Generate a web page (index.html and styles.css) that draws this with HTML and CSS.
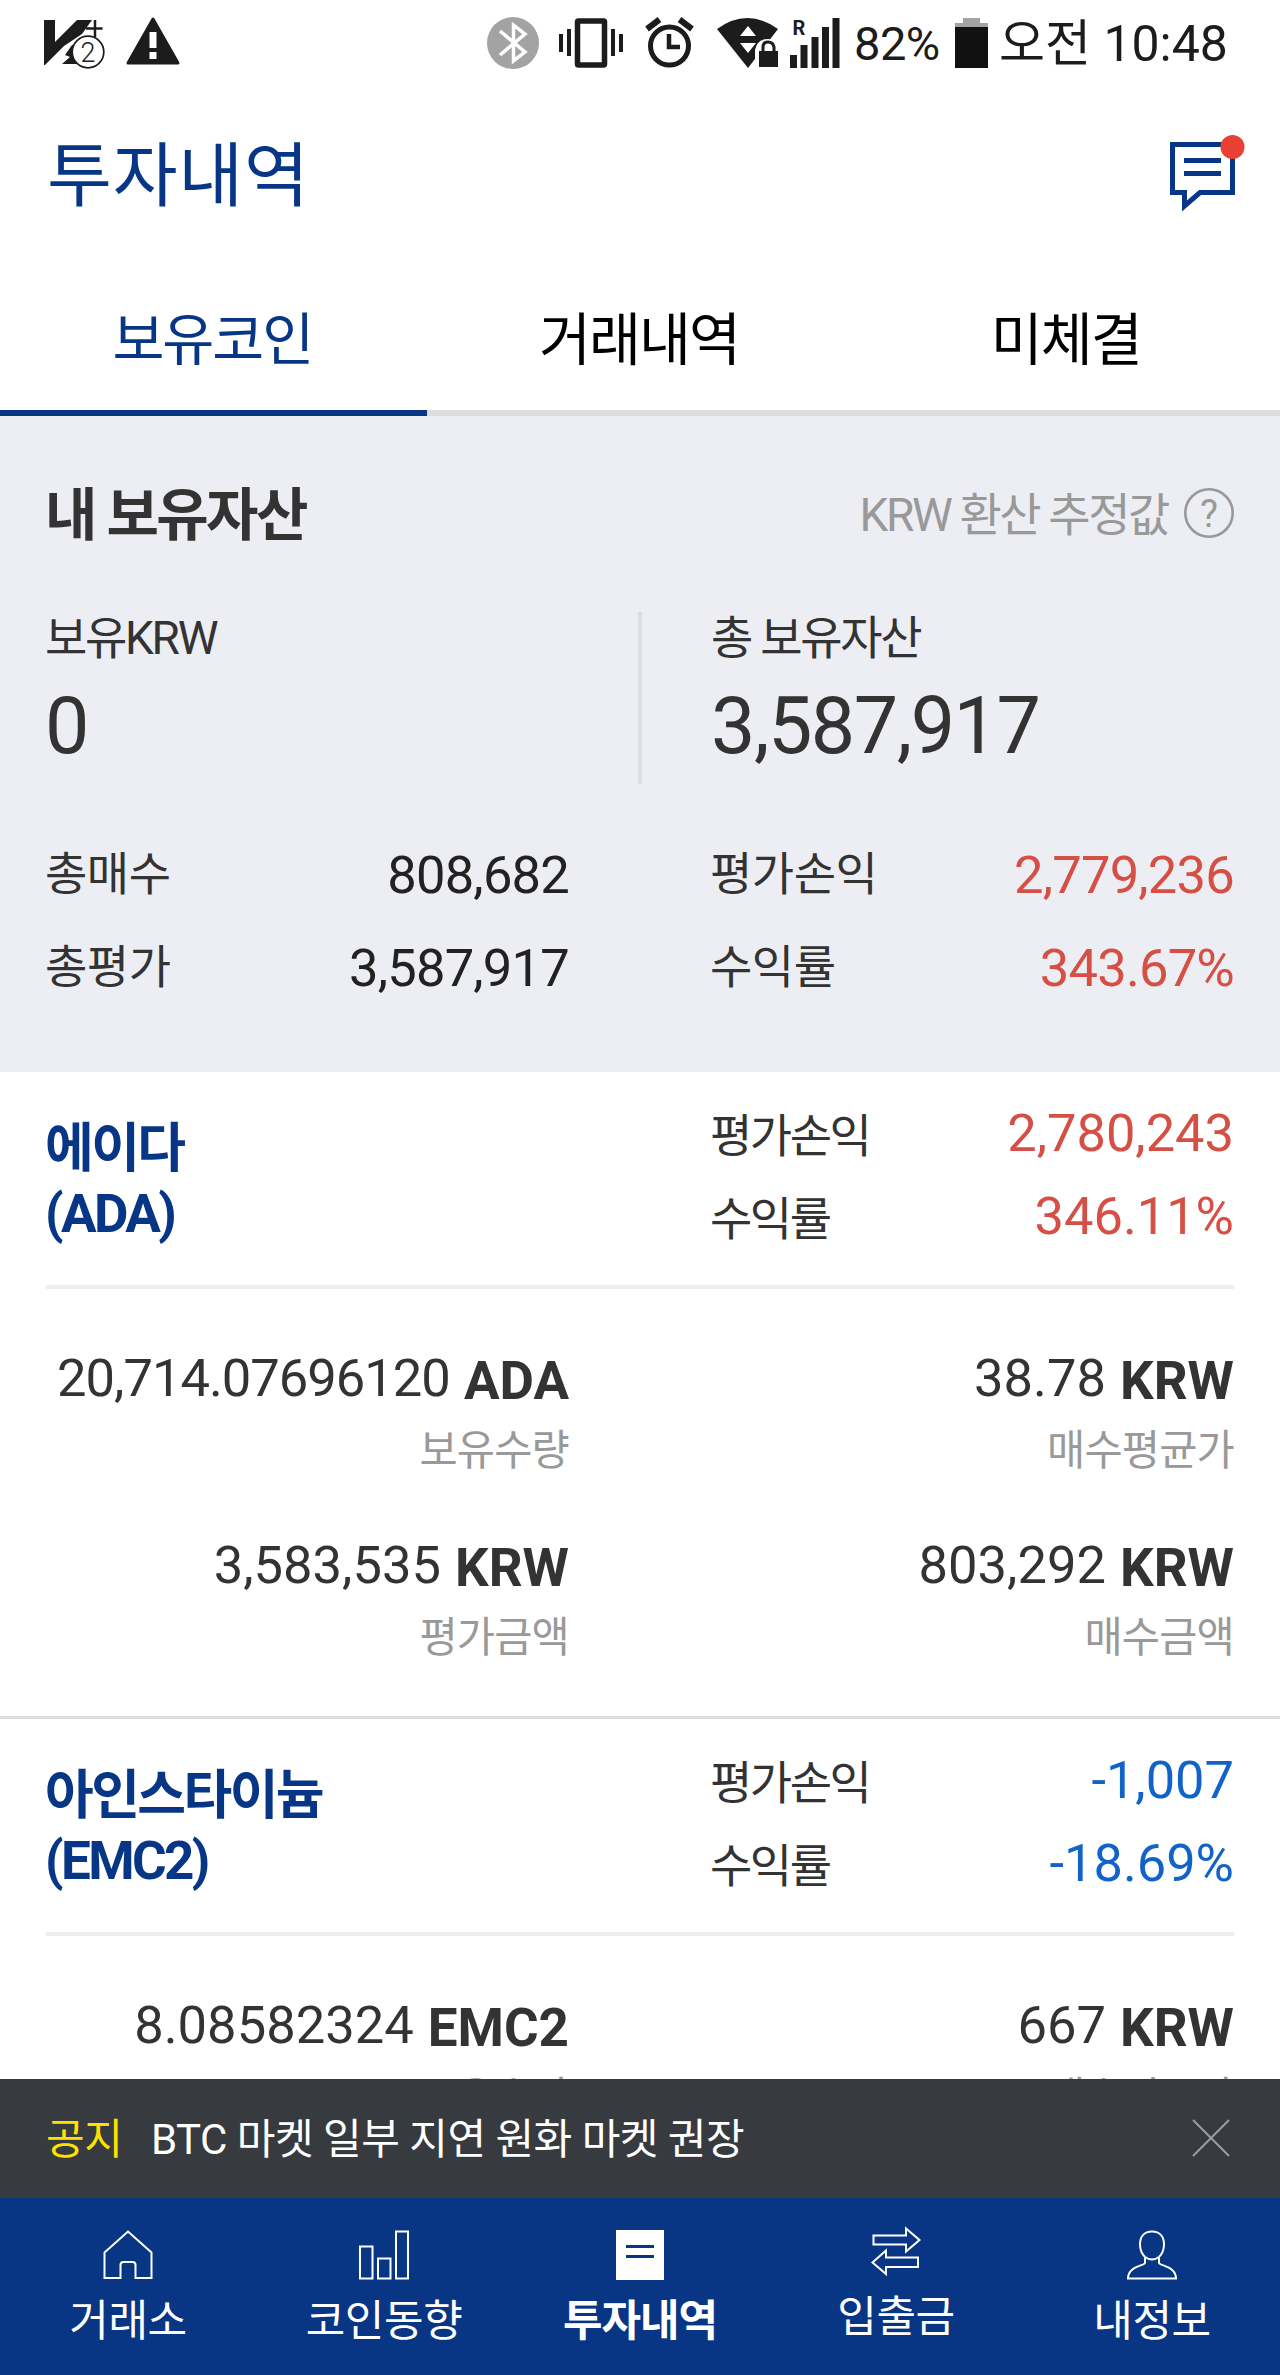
FILE: index.html
```html
<!DOCTYPE html>
<html lang="ko">
<head>
<meta charset="utf-8">
<title>투자내역</title>
<link rel="stylesheet" href="styles.css">
</head>
<body>
<div class="screen">
  <div class="status">
    <svg class="st-v3" width="62" height="54" viewBox="0 0 62 54"><path d="M0 2H11V24L33 2H48L38 16 20 28 1 47H0Z" fill="#1c1c1c"/><path d="M18 46 26 39 21 37 28 27H36V46Z" fill="#1c1c1c"/><path d="M42 10.500H58.500M51 2V19" stroke="#1c1c1c" stroke-width="2.500"/><circle cx="44" cy="34" r="15.800" fill="#fff" stroke="#1c1c1c" stroke-width="1.700"/><text x="44" y="43.500" text-anchor="middle" class="v3-num">2</text></svg>
    <svg class="st-warn" width="54" height="50" viewBox="0 0 54 50"><path d="M27 2 52 46H2Z" fill="#1c1c1c" stroke="#1c1c1c" stroke-width="3" stroke-linejoin="round"/><path d="M27 15V31M27 35V42" stroke="#fff" stroke-width="7"/></svg>
    <svg class="st-bt" width="52" height="52" viewBox="0 0 52 52"><circle cx="26" cy="26" r="26" fill="#a3a3a3"/><path d="M13 14 38 35 26.500 44V8L38 17 13 38" fill="none" stroke="#fff" stroke-width="3.500"/></svg>
    <svg class="st-vib" width="64" height="50" viewBox="0 0 64 50"><rect x="18.500" y="3" width="27" height="44" rx="1" fill="none" stroke="#1c1c1c" stroke-width="5.500"/><path d="M2 16V34M10 11V38M54 11V38M62 16V34" stroke="#1c1c1c" stroke-width="4"/></svg>
    <svg class="st-alarm" width="50" height="52" viewBox="0 0 50 52"><circle cx="24.500" cy="29" r="19" fill="none" stroke="#1c1c1c" stroke-width="5"/><path d="M24 17V30H35" fill="none" stroke="#1c1c1c" stroke-width="4.500"/><path d="M2 12 14.500 2.500M34.500 2.500 47 12" stroke="#1c1c1c" stroke-width="6"/></svg>
    <svg class="st-wifi" width="62" height="52" viewBox="0 0 62 52"><path d="M0 12Q30-10 61 12L31 51Z" fill="#1c1c1c"/><path d="M23 19 31 9 39 19ZM23 26H39L31 36Z" fill="#fff"/><path d="M38 52V33Q40 22 51 22T62 33V52Z" fill="#fff"/><rect x="42" y="34" width="19" height="16" fill="#1c1c1c"/><path d="M46 35V30Q46 25 51 25T57 30V35" fill="none" stroke="#1c1c1c" stroke-width="3"/></svg>
    <svg class="st-signal" width="50" height="50" viewBox="0 0 50 50"><path d="M3.500 50V37M14 50V27M25 50V19M35.500 50V9M46 50V0" stroke="#1c1c1c" stroke-width="7"/><text x="2.500" y="17" class="roam">R</text></svg>
    <span class="st-pct">82%</span>
    <svg class="st-bat" width="33" height="50" viewBox="0 0 33 50"><path d="M8 0H25V5H33V9H0V5H8Z" fill="#a3a3a3"/><rect y="9" width="33" height="41" fill="#111"/></svg>
    <span class="st-time">오전 10:48</span>
  </div>

  <header class="header">
    <h1 class="title">투자내역</h1>
    <svg class="chat" width="75" height="76" viewBox="0 0 75 76"><path d="M2.500 9.500H62.500V57.500H30L14.500 71V57.500H2.500Z" fill="none" stroke="#083686" stroke-width="5"/><path d="M14 25.500H51M14 38.500H51" stroke="#083686" stroke-width="5"/><circle cx="62.500" cy="12" r="12" fill="#e94033"/></svg>
  </header>

  <nav class="tabs">
    <a class="tab tab-on">보유코인</a>
    <a class="tab">거래내역</a>
    <a class="tab">미체결</a>
  </nav>

  <section class="summary">
    <div class="sum-head">
      <h2 class="sum-title">내 보유자산</h2>
      <div class="sum-note"><span class="note-text">KRW 환산 추정값</span><svg class="help" width="50" height="50" viewBox="0 0 50 50"><circle cx="25" cy="25" r="23.700" fill="none" stroke="#999" stroke-width="2.600"/><text x="25" y="39" text-anchor="middle" class="help-mark">?</text></svg></div>
    </div>
    <div class="sum-main">
      <div class="asset"><div class="asset-label">보유KRW</div><div class="asset-value">0</div></div>
      <div class="asset asset-r"><div class="asset-label">총 보유자산</div><div class="asset-value">3,587,917</div></div>
    </div>
    <div class="sum-grid">
      <div class="pair"><span class="k">총매수</span><span class="v">808,682</span></div>
      <div class="pair"><span class="k">평가손익</span><span class="v up">2,779,236</span></div>
      <div class="pair"><span class="k">총평가</span><span class="v">3,587,917</span></div>
      <div class="pair"><span class="k">수익률</span><span class="v up">343.67%</span></div>
    </div>
  </section>

  <main class="coins">
    <article class="coin">
      <div class="coin-head">
        <h3 class="coin-name">에이다<br>(ADA)</h3>
        <div class="coin-pl">
          <div class="row"><span class="rk">평가손익</span><span class="rv up">2,780,243</span></div>
          <div class="row"><span class="rk">수익률</span><span class="rv up">346.11%</span></div>
        </div>
      </div>
      <div class="coin-grid">
        <div class="cell"><div class="amt"><span class="long">20,714.07696120</span> <b>ADA</b></div><div class="cap">보유수량</div></div>
        <div class="cell"><div class="amt">38.78 <b>KRW</b></div><div class="cap">매수평균가</div></div>
        <div class="cell"><div class="amt">3,583,535 <b>KRW</b></div><div class="cap">평가금액</div></div>
        <div class="cell"><div class="amt">803,292 <b>KRW</b></div><div class="cap">매수금액</div></div>
      </div>
    </article>
    <article class="coin">
      <div class="coin-head">
        <h3 class="coin-name">아인스타이늄<br>(EMC2)</h3>
        <div class="coin-pl">
          <div class="row"><span class="rk">평가손익</span><span class="rv down">-1,007</span></div>
          <div class="row"><span class="rk">수익률</span><span class="rv down">-18.69%</span></div>
        </div>
      </div>
      <div class="coin-grid">
        <div class="cell"><div class="amt">8.08582324 <b>EMC2</b></div><div class="cap">보유수량</div></div>
        <div class="cell"><div class="amt">667 <b>KRW</b></div><div class="cap">매수평균가</div></div>
      </div>
    </article>
  </main>

  <div class="notice">
    <span class="notice-tag">공지</span>
    <span class="notice-text">BTC 마켓 일부 지연 원화 마켓 권장</span>
    <svg class="close" width="38" height="38" viewBox="0 0 38 38"><path d="M1 1 37 37M37 1 1 37" stroke="#9b9c9f" stroke-width="2"/></svg>
  </div>

  <nav class="bottom">
    <a class="item"><svg class="ico" width="50" height="50" viewBox="0 0 50 50"><path d="M1.500 22.500 25 1.500 48.500 22.500V48H32.500V35Q32.500 32 29.500 32H20.500Q17.500 32 17.500 35V48H1.500Z" fill="none" stroke="#fff" stroke-width="2"/></svg><span>거래소</span></a>
    <a class="item"><svg class="ico" width="50" height="50" viewBox="0 0 50 50"><path d="M1 16.500H13.500V48.500H1ZM19 28.500H31.500V48.500H19ZM37 1.500H49V48.500H37Z" fill="none" stroke="#fff" stroke-width="2"/></svg><span>코인동향</span></a>
    <a class="item item-on"><svg class="ico" width="50" height="50" viewBox="0 0 50 50"><path d="M1 0H49V50H1Z" fill="#fff"/><path d="M11 16.500H39M11 26.500H39" stroke="#083686" stroke-width="3"/></svg><span>투자내역</span></a>
    <a class="item item-up"><svg class="ico" width="50" height="50" viewBox="0 0 50 50"><path d="M2.500 9.500H35V2.500L48.500 14 35 25.500V18.500H2.500ZM47 31.500H15V24.500L1.500 36.500 15 48V41H47Z" fill="none" stroke="#fff" stroke-width="2"/></svg><span>입출금</span></a>
    <a class="item"><svg class="ico" width="50" height="50" viewBox="0 0 50 50"><path d="M25 1.500C17 1.500 13 7 13 14.500C13 20 15 24 18 27V33C17 36 1 36 1 48.500H49C49 36 33 36 32 33V27C35 24 37 20 37 14.500C37 7 33 1.500 25 1.500ZM18 27Q25 32 32 27" fill="none" stroke="#fff" stroke-width="2"/></svg><span>내정보</span></a>
  </nav>
</div>
</body>
</html>
```
FILE: styles.css
```css
* { box-sizing: border-box; margin: 0; padding: 0; }
body { font-family: Roboto, "Noto Sans CJK KR", sans-serif; background: #fff; color: #333; }
h1, h2, h3 { font-weight: 400; }
svg { display: block; flex: none; overflow: visible; }
.screen { width: 1280px; height: 2375px; display: flex; flex-direction: column; overflow: hidden; white-space: nowrap; }

.status { flex: none; height: 86px; padding: 0 50px 0 44px; display: flex; align-items: center; color: #1c1c1c; }
.st-warn { margin: 0 307px 2px 20px; }
.st-v3 { margin-top: 4px; }
.v3-num { font: 300 27px Roboto, sans-serif; fill: #1c1c1c; }
.st-vib { margin-left: 20px; }
.st-alarm { margin-left: 22px; }
.st-wifi { margin-left: 22px; }
.st-signal { margin-left: 11px; }
.roam { font: 700 20px Roboto, sans-serif; fill: #1c1c1c; }
.st-pct { margin-left: 14px; width: 101px; padding-top: 1px; font-size: 47px; letter-spacing: -0.5px; }
.st-time { margin-left: 11px; font-size: 50px; line-height: 60px; margin-top: 2px; }

.header { flex: none; height: 174px; padding: 0 35px 0 47px; display: flex; justify-content: space-between; align-items: center; }
.title { font-size: 70.500px; line-height: 174px; letter-spacing: 0.8px; padding-top: 7px; color: #083686; }

.tabs { flex: none; height: 156px; display: flex; }
.tab { flex: 1; padding-right: 2px; text-align: center; font-size: 56.500px; line-height: 163px; letter-spacing: -2px; color: #000; border-bottom: 6px solid #ddd; }
.tab-on { color: #083686; border-color: #083686; }

.summary { flex: none; height: 656px; padding: 0 46px; background: #edeef4; }
.sum-head { height: 195px; display: flex; justify-content: space-between; align-items: center; }
.sum-title { font-size: 57px; font-weight: 700; letter-spacing: -2.6px; padding-bottom: 7px; margin-left: -1px; }
.sum-note { display: flex; align-items: center; gap: 16px; font-size: 46px; letter-spacing: -2.4px; color: #999; }
.note-text { padding-bottom: 6px; }
.help { margin-bottom: 1px; }
.help-mark { font-size: 38px; fill: #999; letter-spacing: 0; }
.sum-main { height: 172px; margin-top: 1px; display: flex; }
.asset { width: 596px; border-right: 4px solid #dddee2; }
.asset:first-child { margin-left: -1px; width: 597px; flex: none; }
.asset-r { border: 0; padding-left: 69px; }
.asset-label { font-size: 46px; line-height: 52px; letter-spacing: -2.3px; }
.asset-value { font-size: 79px; line-height: 125px; letter-spacing: -1.5px; }
.sum-grid { margin: 45px 0 0 -1px; display: grid; grid-template-columns: 524px 524px; justify-content: space-between; grid-auto-rows: 93px; }
.pair { display: flex; justify-content: space-between; line-height: 93px; height: 93px; }
.k { font-size: 46px; letter-spacing: -0.5px; margin-top: -1px; }
.v { font-size: 52.500px; letter-spacing: -0.8px; color: #222; }
.v.up, .rv.up { color: #d54f44; }
.rv.down { color: #1263c9; }

.coins { flex: 1; min-height: 0; overflow: hidden; }
.coin { height: 647px; padding: 0 46px; border-bottom: 3px solid #ddd; }
.coin-head { height: 217px; border-bottom: 4px solid #eee; padding-top: 20px; display: flex; justify-content: space-between; }
.coin-name { font-size: 53px; font-weight: 700; line-height: 65px; letter-spacing: -2.6px; color: #083686; padding-top: 25px; margin-left: -1px; }
.coin-pl { width: 524px; }
.row { display: flex; justify-content: space-between; line-height: 83px; height: 83px; }
.rk { font-size: 46px; letter-spacing: -2.5px; padding-top: 3px; }
.rv { font-size: 52.400px; }
.coin-grid { padding-top: 57px; display: grid; grid-template-columns: 523px 523px; justify-content: space-between; grid-auto-rows: 187px; }
.cell { text-align: right; }
.amt { font-size: 52.500px; line-height: 64px; word-spacing: 1px; }
.amt b { font-size: 53px; position: relative; top: 3px; }
.long { letter-spacing: -1px; }
.cap { font-size: 41.500px; line-height: 70px; letter-spacing: -0.8px; padding-top: 6px; color: #999; }

.notice { flex: none; height: 119px; padding: 0 50px 0 46px; background: #373a3f; color: #fff; font-size: 42px; letter-spacing: -0.5px; display: flex; align-items: center; }
.notice-tag { color: #ffe100; width: 105px; padding-bottom: 6px; }
.notice-text { flex: 1; padding-bottom: 6px; }
.close { margin-bottom: 1px; }

.bottom { flex: none; height: 177px; background: #083584; color: #fff; display: flex; }
.item { flex: 1; padding-top: 32px; display: flex; flex-direction: column; align-items: center; font-size: 43px; line-height: 83px; letter-spacing: -0.4px; }
.item-on { font-weight: 700; letter-spacing: -1px; }
.item-up { padding-top: 28px; }
```
